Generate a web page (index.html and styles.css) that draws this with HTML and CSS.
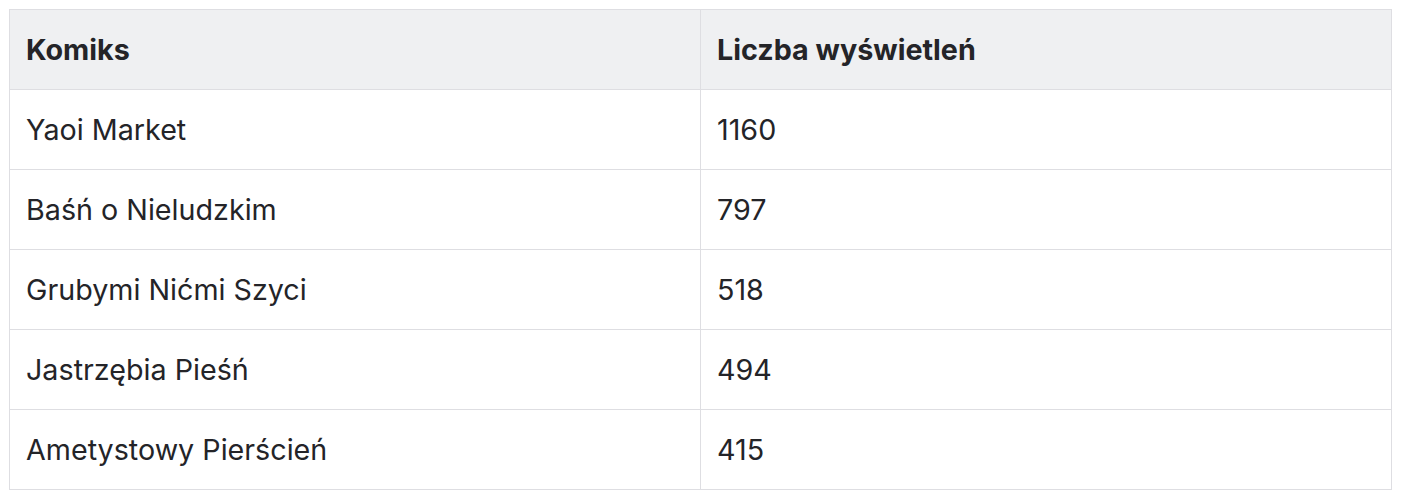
FILE: index.html
```html
<!DOCTYPE html>
<html lang="pl">
<head>
<meta charset="utf-8">
<link rel="stylesheet" href="styles.css">
</head>
<body>
<table class="data">
  <thead>
    <tr><th>Komiks</th><th>Liczba wyświetleń</th></tr>
  </thead>
  <tbody>
    <tr><td>Yaoi Market</td><td>1160</td></tr>
    <tr><td>Baśń o Nieludzkim</td><td>797</td></tr>
    <tr><td>Grubymi Nićmi Szyci</td><td>518</td></tr>
    <tr><td>Jastrzębia Pieśń</td><td>494</td></tr>
    <tr><td>Ametystowy Pierścień</td><td>415</td></tr>
  </tbody>
</table>
</body>
</html>
```
FILE: styles.css
```css
html, body {
  margin: 0;
  background: #ffffff;
}
body {
  padding: 9px;
  font-family: Inter, "Noto Sans", sans-serif;
  color: #242428;
}
.data {
  width: 1383px;
  border-collapse: collapse;
  table-layout: fixed;
  border: 1px solid #dedee2;
}
.data th, .data td {
  border: 1px solid #dedee2;
  padding: 0 16px;
  text-align: left;
  vertical-align: middle;
  font-size: 28.7px;
  box-sizing: border-box;
  height: 80px;
}
.data th {
  background: #eff0f2;
  font-weight: 700;
}
.data td {
  font-weight: 400;
}
```
